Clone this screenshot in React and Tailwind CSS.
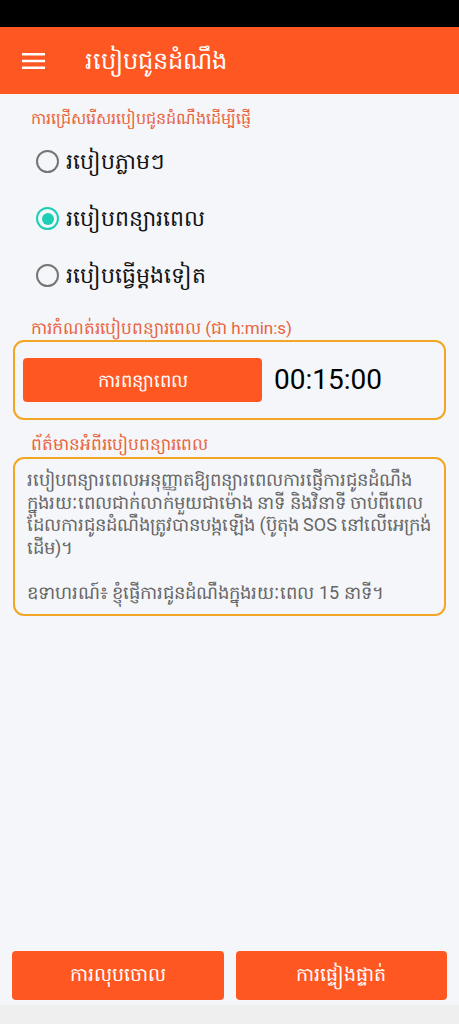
import React from "react";

function Radio({ checked, label }) {
  return (
    <div className="flex items-center h-[57px]">
      <div
        className={
          "w-[23px] h-[23px] rounded-full border-[2.5px] flex items-center justify-center " +
          (checked ? "border-[#1ccfb5]" : "border-[#757575]")
        }
      >
        {checked && <div className="w-[12px] h-[12px] rounded-full bg-[#1ccfb5]" />}
      </div>
      <span className="ml-[7px] text-[22px] text-[#111]">{label}</span>
    </div>
  );
}

export default function App() {
  return (
    <div
      className="w-[459px] h-[1024px] flex flex-col bg-[#f5f6fa] overflow-hidden"
      style={{ fontFamily: "Roboto, 'Noto Sans', sans-serif" }}
    >
      <div className="h-[27px] bg-black shrink-0" />
      <div className="h-[67px] bg-[#ff5722] flex items-center shrink-0">
        <svg width="24" height="18" viewBox="0 0 24 18" className="ml-[22px]">
          <rect x="0" y="1" width="23" height="2.5" fill="#fff" />
          <rect x="0" y="7.75" width="23" height="2.5" fill="#fff" />
          <rect x="0" y="14.5" width="23" height="2.5" fill="#fff" />
        </svg>
        <span className="ml-[39px] text-white text-[24px]">របៀបជូនដំណឹង</span>
      </div>

      <div className="flex-1 flex flex-col">
        <div className="pl-[31px] pt-[13px] text-[16px] text-[#e8643c] leading-[24px]">
          ការជ្រើសរើសរបៀបជូនដំណឹងដើម្បីផ្ញើ
        </div>
        <div className="pl-[36px] pt-[2px] flex flex-col">
          <Radio label="របៀបភ្លាមៗ" />
          <Radio checked label="របៀបពន្យារពេល" />
          <Radio label="របៀបធ្វើម្ដងទៀត" />
        </div>
        <div className="pl-[31px] mt-[12px] text-[17px] text-[#e8643c] leading-[24px]">
          ការកំណត់របៀបពន្យារពេល (ជា h:min:s)
        </div>
        <div className="mx-[13px] mt-0 h-[80px] border-2 border-[#f2a623] rounded-[11px] flex items-center px-[8px]">
          <div className="w-[239px] h-[44px] bg-[#ff5722] rounded-[4px] flex items-center justify-center text-white text-[18px]">
            ការពន្យាពេល
          </div>
          <span className="ml-[12px] text-[28px] text-black">00:15:00</span>
        </div>
        <div className="pl-[31px] mt-[12px] text-[17px] text-[#e8643c] leading-[24px]">
          ព័ត៌មានអំពីរបៀបពន្យារពេល
        </div>
        <div className="mx-[13px] mt-[1px] border-2 border-[#f2a623] rounded-[11px] pl-[12px] pr-[6px] pt-[10px] pb-[10px] text-[18px] text-[#666] leading-[22.5px] whitespace-nowrap">
          <p>
            របៀបពន្យារពេលអនុញ្ញាតឱ្យពន្យារពេលការផ្ញើការជូនដំណឹង
            <br />
            ក្នុងរយៈពេលជាក់លាក់មួយជាម៉ោង នាទី និងវិនាទី ចាប់ពីពេល
            <br />
            ដែលការជូនដំណឹងត្រូវបានបង្កឡើង (ប៊ូតុង SOS នៅលើអេក្រង់
            <br />
            ដើម)។
          </p>
          <p className="mt-[22.5px]">ឧទាហរណ៍៖ ខ្ញុំផ្ញើការជូនដំណឹងក្នុងរយៈពេល 15 នាទី។</p>
        </div>
        <div className="flex-1" />
        <div className="flex gap-[12px] px-[12px] pb-[5px]">
          <div className="flex-1 h-[49px] bg-[#ff5722] rounded-[4px] flex items-center justify-center text-white text-[19px]">
            ការលុបចោល
          </div>
          <div className="flex-1 h-[49px] bg-[#ff5722] rounded-[4px] flex items-center justify-center text-white text-[19px]">
            ការផ្ទៀងផ្ទាត់
          </div>
        </div>
      </div>
      <div className="h-[19px] bg-[#efefef] shrink-0" />
    </div>
  );
}
